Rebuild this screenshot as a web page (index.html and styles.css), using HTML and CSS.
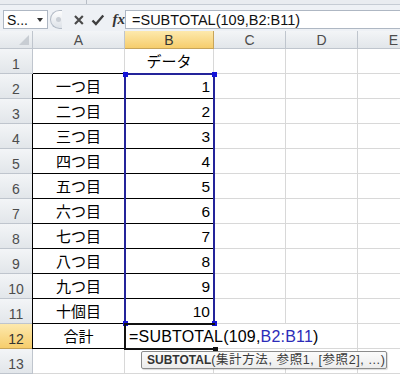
FILE: index.html
```html
<!DOCTYPE html>
<html lang="ja">
<head>
  <meta charset="UTF-8" />
  <meta name="viewport" content="width=device-width, initial-scale=1" />
  <title>SUBTOTAL - データ</title>
  <link rel="stylesheet" href="styles.css">
</head>
<body>
  <div class="ribbon"><span class="ribbon-split"></span></div>

  <!-- formula bar -->
  <div class="fbar">
    <div class="namebox"><span>S...</span><span class="drop"></span></div>
    <div class="grip"><span></span></div>
    <div class="fbtns">
      <svg class="ico" width="12" height="12" viewBox="0 0 12 12"><path d="M2 2L10 10M10 2L2 10" stroke="#4a4a4a" stroke-width="2.2" fill="none"/></svg>
      <svg class="ico" width="14" height="12" viewBox="0 0 14 12"><path d="M1.5 6.5L5 10L12.5 1.5" stroke="#3f3f3f" stroke-width="2.4" fill="none"/></svg>
      <span class="fx">fx</span>
    </div>
    <div class="finput">=SUBTOTAL(109,B2:B11)</div>
  </div>

  <div class="sheet">
    <div class="grid">
      <!-- column headers -->
      <div class="c hd corner"><span class="tri"></span></div>
      <div class="c hd">A</div>
      <div class="c hd sel">B</div>
      <div class="c hd">C</div>
      <div class="c hd">D</div>
      <div class="c hd">E</div>

      <div class="c hd rh">1</div>
      <div class="c bb"></div>
      <div class="c bb">データ</div>
      <div class="c"></div><div class="c"></div><div class="c"></div>

      <div class="c hd rh">2</div>
      <div class="c bx">一つ目</div>
      <div class="c bx num">1</div>
      <div class="c"></div><div class="c"></div><div class="c"></div>

      <div class="c hd rh">3</div>
      <div class="c bx">二つ目</div>
      <div class="c bx num">2</div>
      <div class="c"></div><div class="c"></div><div class="c"></div>

      <div class="c hd rh">4</div>
      <div class="c bx">三つ目</div>
      <div class="c bx num">3</div>
      <div class="c"></div><div class="c"></div><div class="c"></div>

      <div class="c hd rh">5</div>
      <div class="c bx">四つ目</div>
      <div class="c bx num">4</div>
      <div class="c"></div><div class="c"></div><div class="c"></div>

      <div class="c hd rh">6</div>
      <div class="c bx">五つ目</div>
      <div class="c bx num">5</div>
      <div class="c"></div><div class="c"></div><div class="c"></div>

      <div class="c hd rh">7</div>
      <div class="c bx">六つ目</div>
      <div class="c bx num">6</div>
      <div class="c"></div><div class="c"></div><div class="c"></div>

      <div class="c hd rh">8</div>
      <div class="c bx">七つ目</div>
      <div class="c bx num">7</div>
      <div class="c"></div><div class="c"></div><div class="c"></div>

      <div class="c hd rh">9</div>
      <div class="c bx">八つ目</div>
      <div class="c bx num">8</div>
      <div class="c"></div><div class="c"></div><div class="c"></div>

      <div class="c hd rh">10</div>
      <div class="c bx">九つ目</div>
      <div class="c bx num">9</div>
      <div class="c"></div><div class="c"></div><div class="c"></div>

      <div class="c hd rh">11</div>
      <div class="c bx">十個目</div>
      <div class="c bx num">10</div>
      <div class="c"></div><div class="c"></div><div class="c"></div>

      <div class="c hd rh sel">12</div>
      <div class="c bx">合計</div>
      <div class="c nr edit">=SUBTOTAL(109,<span class="ref">B2:B11</span>)</div>
      <div class="c nr"></div><div class="c"></div><div class="c"></div>

      <div class="c hd rh">13</div>
      <div class="c"></div><div class="c"></div><div class="c"></div><div class="c"></div><div class="c"></div>
    </div>

    <!-- reference range B2:B11 -->
    <div class="range">
      <i class="knob tl"></i><i class="knob tr"></i><i class="knob bl"></i><i class="knob br"></i>
    </div>
    <!-- active cell B12 -->
    <div class="active"><i class="handle"></i></div>

    <div class="tip"><b>SUBTOTAL</b><span class="args">(集計方法, 参照1, [参照2], ...)</span></div>
  </div>
</body>
</html>
```

FILE: styles.css
```css
body {
  margin: 0;
  background: #fff;
  overflow: hidden;
  font-family: "Liberation Sans", "Noto Sans CJK JP", sans-serif;
  color: #000;
}

/* ribbon leftover at the very top */
.ribbon {
  height: 4px;
  background: #e9ecf0;
  border-bottom: 1px solid #c6ccd4;
  position: relative;
}

.ribbon-split {
  position: absolute;
  left: 86px;
  top: 0;
  width: 1px;
  height: 4px;
  background: #b8bec6;
}

/* formula bar */
.fbar {
  height: 26px;
  box-sizing: border-box;
  padding: 5px 0 2px 3px;
  background: #eef1f5;
  display: flex;
  align-items: stretch;
}

.namebox {
  width: 45px;
  box-sizing: border-box;
  background: #fff;
  border: 1px solid #aeb7c3;
  display: flex;
  align-items: center;
  padding-left: 3px;
  font-size: 14px;
  color: #111;
}

.drop {
  margin-left: 9px;
  border-left: 3px solid transparent;
  border-right: 3px solid transparent;
  border-top: 4px solid #333;
}

.grip {
  width: 12px;
  margin-left: 2px;
  box-sizing: border-box;
  border: 1px solid #b3bbc6;
  border-right: none;
  border-radius: 10px 0 0 10px;
  background: linear-gradient(#fdfdfd, #dde2e8);
  display: flex;
  align-items: center;
  justify-content: center;
}

.grip span {
  width: 5px;
  height: 5px;
  border-radius: 50%;
  background: #c9ced5;
  margin-left: 3px;
}

.fbtns {
  width: 63px;
  display: flex;
  align-items: center;
  gap: 6px;
  padding-left: 11px;
  box-sizing: border-box;
}

.fx {
  font-family: "Liberation Serif", serif;
  font-style: italic;
  font-weight: bold;
  font-size: 15px;
  color: #333;
  margin-left: 2px;
}

.finput {
  flex: 1;
  background: #fff;
  border: 1px solid #aeb7c3;
  border-right: none;
  display: flex;
  align-items: center;
  padding-left: 6px;
  font-size: 14.5px;
  color: #111;
  white-space: nowrap;
}

/* sheet */
.sheet {
  position: relative;
  height: 345px;
  overflow: hidden;
}

.grid {
  display: grid;
  grid-template-columns: 33px 92px 89px 72px 72px 72px;
  grid-template-rows: 18px;
  grid-auto-rows: 25px;
  width: 430px;
}

.c {
  box-sizing: border-box;
  border-right: 1px solid #d8d8d8;
  border-bottom: 1px solid #d8d8d8;
  display: flex;
  align-items: flex-end;
  justify-content: center;
  padding-bottom: 2px;
  line-height: 18px;
  font-size: 15px;
  white-space: nowrap;
}

.hd {
  background: linear-gradient(#f3f5f7, #e2e6ea);
  border-right-color: #bfc5cd;
  border-bottom-color: #bfc5cd;
  color: #4c4c4c;
  font-size: 14px;
  align-items: center;
  padding-bottom: 0;
}

.rh {
  align-items: flex-end;
  padding-bottom: 0;
  line-height: 17px;
}

.hd.sel {
  background: linear-gradient(#fde9ad, #f6cd6c);
  border-right-color: #c7a45a;
  border-bottom-color: #c7a45a;
  color: #333;
}

.corner {
  position: relative;
}

.tri {
  position: absolute;
  right: 3px;
  bottom: 3px;
  border-left: 10px solid transparent;
  border-bottom: 10px solid #c8cdd3;
}

.bb {
  border-bottom-color: #000;
}

.bx {
  border-right-color: #000;
  border-bottom-color: #000;
  box-shadow: -1px 0 0 #000;
}

.num {
  justify-content: flex-end;
  padding-right: 3px;
  font-size: 15.5px;
}

.nr {
  border-right-color: transparent;
}

.edit {
  justify-content: flex-start;
  padding-left: 4px;
  font-size: 16px;
  letter-spacing: 0.2px;
  overflow: visible;
}

.ref {
  color: #2b2bb8;
}

/* overlays on the grid */
.range {
  position: absolute;
  left: 124px;
  top: 42px;
  width: 91px;
  height: 252px;
  box-sizing: border-box;
  border: 2px solid #24249a;
}

.knob {
  position: absolute;
  width: 5px;
  height: 5px;
  background: #1414d8;
}

.tl { left: -3px; top: -3px; }
.tr { right: -4px; top: -3px; }
.bl { left: -3px; bottom: -3px; }
.br { right: -4px; bottom: -3px; }

.active {
  position: absolute;
  left: 124px;
  top: 292px;
  width: 91px;
  height: 27px;
  box-sizing: border-box;
  border: 2px solid #111;
  border-right: none;
}

.handle {
  position: absolute;
  right: -3px;
  bottom: -4px;
  width: 5px;
  height: 5px;
  background: #111;
}

.tip {
  position: absolute;
  left: 141px;
  top: 320px;
  width: 246px;
  height: 18px;
  box-sizing: border-box;
  border: 1px solid #8c8c8c;
  border-radius: 2px;
  background: linear-gradient(#fbfbfb, #ececec);
  box-shadow: 1px 1px 1px rgba(0, 0, 0, 0.15);
  padding-left: 5px;
  font-size: 12px;
  line-height: 16px;
  color: #3a3a3a;
  white-space: nowrap;
}

.tip b {
  color: #333;
}

.args {
  font-size: 12.5px;
  letter-spacing: 0.6px;
}
```
